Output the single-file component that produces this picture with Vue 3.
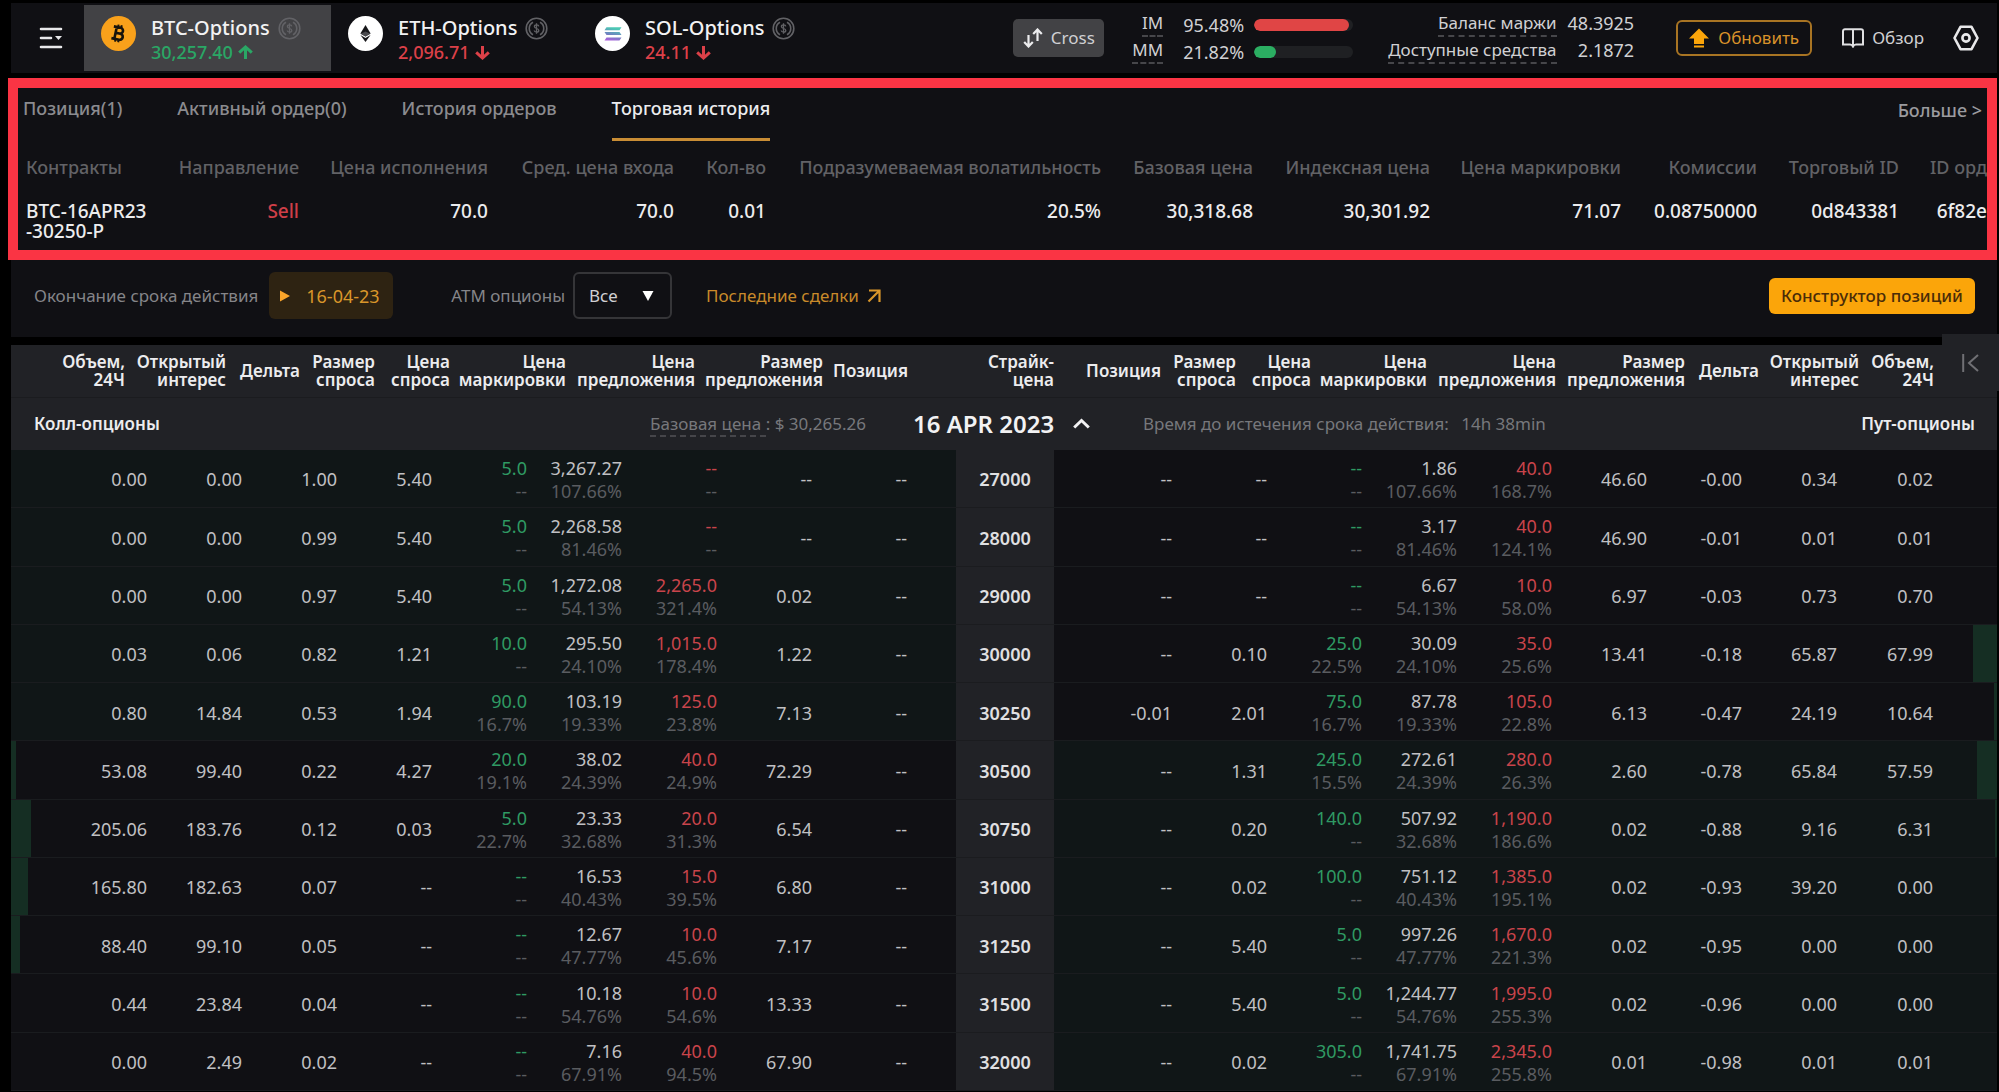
<script setup>
import { ref } from 'vue'

const markets = [
  { id: 'btc', name: 'BTC-Options', price: '30,257.40', dir: 'up' },
  { id: 'eth', name: 'ETH-Options', price: '2,096.71', dir: 'down' },
  { id: 'sol', name: 'SOL-Options', price: '24.11', dir: 'down' },
]
const market = ref('btc')

const tabs = ['Позиция(1)', 'Активный ордер(0)', 'История ордеров', 'Торговая история']
const tab = ref(3)

const trade = [
  { label: 'Контракты', width: 140 },
  { label: 'Направление', value: 'Sell', width: 141, sell: true },
  { label: 'Цена исполнения', value: '70.0', width: 189 },
  { label: 'Сред. цена входа', value: '70.0', width: 186 },
  { label: 'Кол-во', value: '0.01', width: 92 },
  { label: 'Подразумеваемая волатильность', value: '20.5%', width: 335 },
  { label: 'Базовая цена', value: '30,318.68', width: 152 },
  { label: 'Индексная цена', value: '30,301.92', width: 177 },
  { label: 'Цена маркировки', value: '71.07', width: 191 },
  { label: 'Комиссии', value: '0.08750000', width: 136 },
  { label: 'Торговый ID', value: '0d843381', width: 142 },
  { label: 'ID орд', value: '6f82e', width: 88 },
]

const atm = ref('all')

const heads = [
  ['Объем,', '24Ч', 114], ['Открытый', 'интерес', 101], ['Дельта', '', 74], ['Размер', 'спроса', 75],
  ['Цена', 'спроса', 75], ['Цена', 'маркировки', 116], ['Цена', 'предложения', 129],
  ['Размер', 'предложения', 128], ['Позиция', '', 85], ['Страйк-', 'цена', 146], ['Позиция', '', 107],
  ['Размер', 'спроса', 75], ['Цена', 'спроса', 75], ['Цена', 'маркировки', 116],
  ['Цена', 'предложения', 129], ['Размер', 'предложения', 129], ['Дельта', '', 74],
  ['Открытый', 'интерес', 100], ['Объем,', '24Ч', 138],
]
const cols = [136, 95, 95, 95, 95, 95, 95, 95, 144, 98, 118, 95, 95, 95, 95, 95, 95, 95, 160]

// call: volume, interest, delta, bid size, [bid, iv], [mark, iv], [ask, iv], ask size, position
// put:  position, bid size, [bid, iv], [mark, iv], [ask, iv], ask size, delta, interest, volume
const rows = [
  { strike: 27000, call: ['0.00', '0.00', '1.00', '5.40', ['5.0', '--'], ['3,267.27', '107.66%'], ['--', '--'], '--', '--'],
    put: ['--', '--', ['--', '--'], ['1.86', '107.66%'], ['40.0', '168.7%'], '46.60', '-0.00', '0.34', '0.02'] },
  { strike: 28000, call: ['0.00', '0.00', '0.99', '5.40', ['5.0', '--'], ['2,268.58', '81.46%'], ['--', '--'], '--', '--'],
    put: ['--', '--', ['--', '--'], ['3.17', '81.46%'], ['40.0', '124.1%'], '46.90', '-0.01', '0.01', '0.01'] },
  { strike: 29000, call: ['0.00', '0.00', '0.97', '5.40', ['5.0', '--'], ['1,272.08', '54.13%'], ['2,265.0', '321.4%'], '0.02', '--'],
    put: ['--', '--', ['--', '--'], ['6.67', '54.13%'], ['10.0', '58.0%'], '6.97', '-0.03', '0.73', '0.70'] },
  { strike: 30000, putBar: 24, call: ['0.03', '0.06', '0.82', '1.21', ['10.0', '--'], ['295.50', '24.10%'], ['1,015.0', '178.4%'], '1.22', '--'],
    put: ['--', '0.10', ['25.0', '22.5%'], ['30.09', '24.10%'], ['35.0', '25.6%'], '13.41', '-0.18', '65.87', '67.99'] },
  { strike: 30250, putBar: 3, call: ['0.80', '14.84', '0.53', '1.94', ['90.0', '16.7%'], ['103.19', '19.33%'], ['125.0', '23.8%'], '7.13', '--'],
    put: ['-0.01', '2.01', ['75.0', '16.7%'], ['87.78', '19.33%'], ['105.0', '22.8%'], '6.13', '-0.47', '24.19', '10.64'] },
  { strike: 30500, callBar: 5, putBar: 20, call: ['53.08', '99.40', '0.22', '4.27', ['20.0', '19.1%'], ['38.02', '24.39%'], ['40.0', '24.9%'], '72.29', '--'],
    put: ['--', '1.31', ['245.0', '15.5%'], ['272.61', '24.39%'], ['280.0', '26.3%'], '2.60', '-0.78', '65.84', '57.59'] },
  { strike: 30750, callBar: 20, putBar: 2, call: ['205.06', '183.76', '0.12', '0.03', ['5.0', '22.7%'], ['23.33', '32.68%'], ['20.0', '31.3%'], '6.54', '--'],
    put: ['--', '0.20', ['140.0', '--'], ['507.92', '32.68%'], ['1,190.0', '186.6%'], '0.02', '-0.88', '9.16', '6.31'] },
  { strike: 31000, callBar: 17, call: ['165.80', '182.63', '0.07', '--', ['--', '--'], ['16.53', '40.43%'], ['15.0', '39.5%'], '6.80', '--'],
    put: ['--', '0.02', ['100.0', '--'], ['751.12', '40.43%'], ['1,385.0', '195.1%'], '0.02', '-0.93', '39.20', '0.00'] },
  { strike: 31250, callBar: 9, call: ['88.40', '99.10', '0.05', '--', ['--', '--'], ['12.67', '47.77%'], ['10.0', '45.6%'], '7.17', '--'],
    put: ['--', '5.40', ['5.0', '--'], ['997.26', '47.77%'], ['1,670.0', '221.3%'], '0.02', '-0.95', '0.00', '0.00'] },
  { strike: 31500, call: ['0.44', '23.84', '0.04', '--', ['--', '--'], ['10.18', '54.76%'], ['10.0', '54.6%'], '13.33', '--'],
    put: ['--', '5.40', ['5.0', '--'], ['1,244.77', '54.76%'], ['1,995.0', '255.3%'], '0.02', '-0.96', '0.00', '0.00'] },
  { strike: 32000, call: ['0.00', '2.49', '0.02', '--', ['--', '--'], ['7.16', '67.91%'], ['40.0', '94.5%'], '67.90', '--'],
    put: ['--', '0.02', ['305.0', '--'], ['1,741.75', '67.91%'], ['2,345.0', '255.8%'], '0.01', '-0.98', '0.01', '0.01'] },
]
const spot = 30265.26
const callTone = { 4: 'bid', 6: 'ask' }
const putTone = { 2: 'bid', 4: 'ask' }
</script>

<template>
  <div class="page">
    <header class="top">
      <button class="plain menu" aria-label="Меню">
        <svg width="24" height="24" viewBox="0 0 24 24" fill="none" stroke="#e8e8ea" stroke-width="2.600" stroke-linecap="round">
          <path d="M2 3H22M2 12H12M2 21H22" /><path d="M16 10h7L19.500 14z" fill="#e8e8ea" stroke="none" />
        </svg>
      </button>
      <nav class="markets">
        <button v-for="m in markets" :key="m.id" class="plain market" :class="{ on: market === m.id }" @click="market = m.id">
          <svg v-if="m.id === 'btc'" class="coin" viewBox="0 0 35 35">
            <circle cx="17.500" cy="17.500" r="17.500" fill="#f9a11b" />
            <g transform="rotate(12 17.500 17.500)" fill="none" stroke="#17130c" stroke-width="2.600">
              <path d="M11.500 11.500H18.500a2.900 2.900 0 0 1 0 5.800H14.500M14.500 17.300H19.300a3.100 3.100 0 0 1 0 6.200H11.500M14.500 11.500V23.500" />
              <path d="M15.800 8.800V11.500M19 8.800V11.500M15.800 23.500V26.200M19 23.500V26.200" stroke-width="2" />
            </g>
          </svg>
          <svg v-else-if="m.id === 'eth'" class="coin" viewBox="0 0 35 35">
            <circle cx="17.500" cy="17.500" r="17.500" fill="#fff" />
            <path d="M17.500 9L22.600 17.600L17.500 20.500L12.400 17.600z" fill="#17171a" />
            <path d="M12.400 19L17.500 22L22.600 19L17.500 26z" fill="#17171a" />
            <path d="M12.600 17.700L17.500 15.500L22.400 17.700L17.500 20.500z" fill="#4a4a4e" />
          </svg>
          <svg v-else class="coin" viewBox="0 0 35 35">
            <defs>
              <linearGradient id="sol" x1="0" y1="1" x2="0.300" y2="0">
                <stop offset="0" stop-color="#b45be0" /><stop offset="0.500" stop-color="#6f80c0" /><stop offset="1" stop-color="#4cc9b4" />
              </linearGradient>
            </defs>
            <circle cx="17.500" cy="17.500" r="17.500" fill="#fff" />
            <path d="M11.500 11.200H26.500L24.500 14.300H9.500zM9.500 16.100H24.500L26.500 19.100H11.500zM11.500 21.500H26.500L24.500 24.600H9.500z" fill="url(#sol)" />
          </svg>
          <span class="quote">
            <span class="name">{{ m.name }}
              <svg width="23" height="23" viewBox="0 0 23 23" fill="none" stroke="#626266" stroke-width="1.600">
                <circle cx="11.500" cy="11.500" r="10.300" />
                <path d="M8 5.300a7 7 0 0 0 0 12.400M15 5.300a7 7 0 0 1 0 12.400" />
                <path d="M13.800 9.400C13.500 7.400 9.400 7.500 9.400 9.600C9.400 12 13.800 11 13.800 13.400C13.800 15.600 9.500 15.600 9.200 13.500M11.500 6.300V16.700" stroke-width="1.300" />
              </svg>
            </span>
            <span class="price" :class="m.dir">{{ m.price }}
              <svg width="15" height="15" viewBox="0 0 15 15" fill="none" stroke="currentColor" stroke-width="3">
                <path :d="m.dir === 'up' ? 'M7.500 14V2M1.200 7.700L7.500 2L13.800 7.700' : 'M7.500 1V13M1.200 7.300L7.500 13L13.800 7.300'" />
              </svg>
            </span>
          </span>
        </button>
      </nav>

      <button class="plain cross">
        <svg width="20" height="20" viewBox="0 0 20 20" fill="none" stroke="#ececee" stroke-width="2.200">
          <path d="M5.500 7V18M1.200 14L5.500 18.500L9.800 14M14.500 13V2M10.200 6L14.500 1.500L18.800 6" />
        </svg>Cross
      </button>
      <div class="risk">
        <span class="tip">IM</span><span class="pct">95.48%</span>
        <span class="track"><i class="fill high" :style="{ width: '95.48%' }"></i></span>
        <span class="tip">MM</span><span class="pct">21.82%</span>
        <span class="track"><i class="fill low" :style="{ width: '21.82%' }"></i></span>
      </div>
      <div class="balance">
        <span class="tip">Баланс маржи</span><span class="sum">48.3925</span>
        <span class="tip">Доступные средства</span><span class="sum">2.1872</span>
      </div>
      <button class="plain upgrade">
        <svg width="20" height="20" viewBox="0 0 20 20" fill="#fba50a"><path d="M10 0.500L20 10.500H15V16H5V10.500H0zM5 17.500H15V19.500H5z" /></svg>Обновить
      </button>
      <button class="plain overview">
        <svg width="22" height="20" viewBox="0 0 22 20" fill="none" stroke="#e0e0e2" stroke-width="2">
          <path d="M11 2V19M3 1.200H19A2 2 0 0 1 21 3.200V16.500H14C12 16.500 11.500 17.500 11 18.500C10.500 17.500 10 16.500 8 16.500H1V3.200A2 2 0 0 1 3 1.200z" />
        </svg>Обзор
      </button>
      <button class="plain gear" aria-label="Настройки">
        <svg width="26" height="26" viewBox="0 0 26 26" fill="none" stroke="#e8e8ea" stroke-width="2.600" stroke-linejoin="round">
          <path d="M7.500 1.800H18.500L24.500 13L18.500 24.200H7.500L1.500 13z" /><circle cx="13" cy="13" r="3.600" />
        </svg>
      </button>
    </header>

    <section class="history">
      <div class="tabs">
        <button v-for="(t, i) in tabs" :key="t" class="plain tab" :class="{ on: tab === i }" @click="tab = i">{{ t }}</button>
        <a href="#" class="more">Больше &gt;</a>
      </div>
      <table class="trades">
        <colgroup><col v-for="c in trade" :key="c.label" :style="{ width: c.width + 'px' }" /></colgroup>
        <thead>
          <tr><th v-for="c in trade" :key="c.label" scope="col">{{ c.label }}</th></tr>
        </thead>
        <tbody>
          <tr>
            <td>BTC-16APR23<br />-30250-P</td>
            <td v-for="c in trade.slice(1)" :key="c.label" :class="{ sell: c.sell }">{{ c.value }}</td>
          </tr>
        </tbody>
      </table>
    </section>

    <section class="filters">
      <span>Окончание срока действия</span>
      <button class="plain expiry">
        <svg width="10" height="12" viewBox="0 0 10 12" fill="#fba52a"><path d="M0 0.500L10 6L0 11.500z" /></svg>
        <span>16-04-23</span>
      </button>
      <label for="atm">ATM опционы</label>
      <span class="pick">
        <select id="atm" v-model="atm"><option value="all">Все</option></select>
        <svg width="12" height="10" viewBox="0 0 12 10" fill="#fff"><path d="M0.500 0H11.500L6 10z" /></svg>
      </span>
      <a href="#" class="recent">Последние сделки
        <svg width="14" height="14" viewBox="0 0 14 14" fill="none" stroke="#d9962a" stroke-width="2.200"><path d="M2 1.500H12.500V13M12 2L1.500 12.500" /></svg>
      </a>
      <button class="plain builder">Конструктор позиций</button>
    </section>

    <section class="chain">
      <button class="plain collapse" aria-label="Свернуть">
        <svg width="17" height="18" viewBox="0 0 17 18" fill="none" stroke="#707074" stroke-width="2"><path d="M1.200 0V18M16 1L7 9L16 17" /></svg>
      </button>
      <table class="heads">
        <colgroup><col v-for="(h, i) in heads" :key="i" :style="{ width: h[2] + 'px' }" /></colgroup>
        <thead>
          <tr><th v-for="(h, i) in heads" :key="i" scope="col">{{ h[0] }}<template v-if="h[1]"><br />{{ h[1] }}</template></th></tr>
        </thead>
      </table>
      <div class="group">
        <div class="side">
          <b>Колл-опционы</b>
          <span><span class="tip">Базовая цена </span>: $ 30,265.26</span>
        </div>
        <button class="plain date">16 APR 2023
          <svg width="17" height="11" viewBox="0 0 17 11" fill="none" stroke="#f2f2f3" stroke-width="3"><path d="M1.200 9.500L8.500 2.500L15.800 9.500" /></svg>
        </button>
        <div class="side puts">
          <span class="left">Время до истечения срока действия: <span>14h 38min</span></span>
          <b>Пут-опционы</b>
        </div>
      </div>
      <table class="book">
        <colgroup><col v-for="(w, i) in cols" :key="i" :style="{ width: w + 'px' }" /></colgroup>
        <tbody>
          <tr v-for="r in rows" :key="r.strike">
            <td v-for="(c, i) in r.call" :key="'c' + i" :class="[callTone[i], { itm: r.strike < spot }]">
              <i v-if="i === 0 && r.callBar" class="bar" :style="{ width: r.callBar + 'px' }"></i>
              <template v-if="Array.isArray(c)">{{ c[0] }}<small>{{ c[1] }}</small></template>
              <template v-else>{{ c }}</template>
            </td>
            <th scope="row">{{ r.strike }}</th>
            <td v-for="(c, i) in r.put" :key="'p' + i" :class="[putTone[i], { itm: r.strike > spot }]">
              <template v-if="Array.isArray(c)">{{ c[0] }}<small>{{ c[1] }}</small></template>
              <template v-else>{{ c }}</template>
              <i v-if="i === 8 && r.putBar" class="bar right" :style="{ width: r.putBar + 'px' }"></i>
            </td>
          </tr>
        </tbody>
      </table>
    </section>
  </div>
</template>

<style>
body { margin: 0; background: #000; }
</style>

<style scoped>
* { box-sizing: border-box; }
.page {
  display: flex; flex-direction: column; min-height: 100vh; padding: 3px 2px 1px 11px;
  background: #000; color: #d0d0d3; font: 400 17px/20px "Noto Sans", sans-serif; overflow: hidden;
}
.plain { margin: 0; padding: 0; border: 0; background: none; color: inherit; font: inherit; cursor: pointer; white-space: nowrap; }
svg { display: block; flex: none; }
a { text-decoration: none; }
table { width: 100%; border-collapse: collapse; table-layout: fixed; }
.tip { border-bottom: 2px dashed #46464a; }

.top { display: flex; align-items: center; height: 70px; padding-right: 18px; background: #101014; white-space: nowrap; }
.menu { width: 73px; padding-left: 28px; }
.markets { display: flex; height: 66px; margin-right: auto; }
.market { display: flex; width: 247px; padding: 11px 0 0 17px; text-align: left; }
.market.on { background: #424245; }
.coin { width: 35px; height: 35px; margin-right: 15px; }
.name, .price { display: flex; align-items: center; height: 24px; }
.name { gap: 8px; color: #f2f2f3; font-size: 20px; font-weight: 500; }
.price { gap: 5px; font-size: 18px; font-weight: 500; }
.up { color: #2aa765; }
.down { color: #dc4048; }
.cross { display: flex; align-items: center; justify-content: center; gap: 8px; width: 91px; height: 38px; margin-right: 28px; border-radius: 5px; background: #424245; }
.risk { display: grid; grid-template-columns: auto auto 99px; column-gap: 10px; row-gap: 3px; justify-items: end; align-items: center; margin-right: 35px; }
.risk .tip, .balance .tip { padding-bottom: 2px; line-height: 20px; }
.pct, .sum { font-size: 18px; }
.pct { padding-left: 10px; }
.track { width: 99px; height: 12px; border-radius: 6px; background: #1f2023; overflow: hidden; }
.fill { display: block; height: 12px; border-radius: 6px; }
.high { background: #e04545; }
.low { background: #2bae62; }
.balance { display: grid; grid-template-columns: auto auto; column-gap: 11px; row-gap: 3px; justify-items: end; margin-right: 42px; }
.upgrade { display: flex; align-items: center; justify-content: center; gap: 9px; width: 136px; height: 36px; margin-right: 30px; border: 2px solid #a87423; border-radius: 6px; color: #d9922a; }
.overview { display: flex; align-items: center; gap: 8px; margin-right: 29px; }

.history { height: 182px; margin: 5px 0 0 -3px; border: 10px solid #fa3444; background: #101014; overflow: hidden; }
.tabs { display: flex; gap: 55px; height: 53px; padding: 0 5px; }
.tab { height: 53px; padding-bottom: 10px; border-bottom: 3px solid transparent; color: #8b8b8f; font-size: 18px; font-weight: 500; line-height: 40px; }
.tab.on { border-color: #c98d35; color: #ececee; }
.more { margin-left: auto; color: #9b9b9f; font-size: 18px; font-weight: 500; line-height: 44px; white-space: nowrap; }
.trades { font-size: 18px; font-weight: 500; text-align: right; white-space: nowrap; }
.trades th { height: 52px; padding: 0; color: #626266; font-weight: 500; }
.trades td { padding: 8px 0 0; color: #ececee; font-size: 19px; vertical-align: top; }
.trades th:first-child, .trades td:first-child { padding-left: 8px; text-align: left; }
.trades .sell { color: #cf3f48; }

.filters { display: flex; align-items: center; height: 77px; padding: 0 22px 6px 23px; background: #101014; color: #858589; white-space: nowrap; }
.expiry { display: flex; align-items: center; gap: 16px; width: 124px; height: 47px; margin: 0 58px 0 11px; padding: 0 14px 0 11px; border-radius: 6px; background: #2e2312; color: #d9962a; font-size: 18px; }
.expiry span { overflow: hidden; }
.pick { position: relative; margin: 0 34px 0 8px; }
select { appearance: none; display: block; width: 99px; height: 47px; padding: 0 14px; border: 2px solid #353538; border-radius: 6px; background: transparent; color: #d0d0d3; font: inherit; }
.pick svg { position: absolute; top: 19px; right: 18px; pointer-events: none; }
.recent { display: flex; align-items: center; gap: 8px; color: #c98a2a; }
.builder { width: 206px; height: 36px; margin-left: auto; border-radius: 6px; background: #fba50a; color: #4a2c08; font-weight: 500; }

.chain { position: relative; display: flex; flex: 1; flex-direction: column; margin-top: 8px; }
.collapse { position: absolute; top: -11px; right: -2px; display: flex; align-items: center; justify-content: center; width: 57px; height: 57px; background: #212226; }
.heads { background: #212226; color: #ececee; line-height: 18px; text-align: right; white-space: nowrap; }
.heads th { height: 52px; padding: 0; border-bottom: 1px solid #1b1c1f; font-weight: 600; }
.heads th:last-child { padding-right: 63px; }
.group { display: grid; grid-template-columns: 855fr 277fr 854fr; height: 52px; background: #212226; color: #77787c; white-space: nowrap; }
.side { display: flex; align-items: center; justify-content: space-between; padding-left: 23px; }
.side.puts { padding: 0 22px 0 0; }
.side b { color: #ececee; font-weight: 600; }
.left span { padding-left: 8px; }
.date { display: flex; align-items: center; gap: 19px; padding-left: 47px; color: #f2f2f3; font-size: 24px; font-weight: 600; }

.book { flex: 1; background: #101014; color: #c0c0c3; font-size: 18px; font-weight: 400; line-height: 23px; text-align: right; }
.book td, .book th { position: relative; height: 58px; padding: 3px 0 0; border-bottom: 1px solid #1a1c1f; }
.book td.itm { background: #101617; }
.book th { background: #212226; border-color: #1b1c1f; color: #e0e0e2; font-weight: 600; text-align: center; }
.book td:nth-child(9) { padding-right: 49px; }
.book td:last-child { padding-right: 64px; }
small { display: block; color: #5a5c60; font-size: inherit; }
.book .bid { color: #2f9a63; }
.book .ask { color: #c9444b; }
.bar { position: absolute; top: 0; bottom: 0; left: 0; background: #152e23; }
.bar.right { right: 0; left: auto; }
</style>
